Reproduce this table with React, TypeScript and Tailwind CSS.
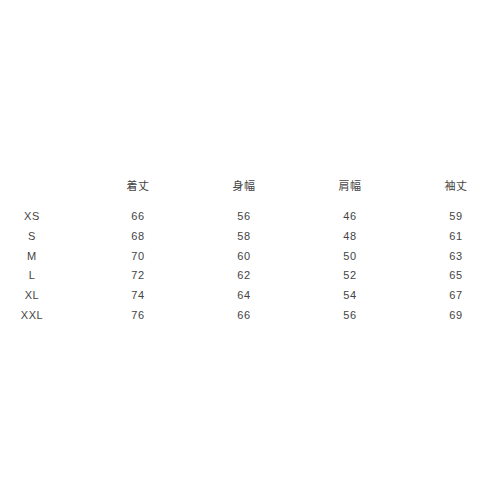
const headers = ['', '着丈', '身幅', '肩幅', '袖丈']

const rows = [
  ['XS', '66', '56', '46', '59'],
  ['S', '68', '58', '48', '61'],
  ['M', '70', '60', '50', '63'],
  ['L', '72', '62', '52', '65'],
  ['XL', '74', '64', '54', '67'],
  ['XXL', '76', '66', '56', '69'],
]

export default function App() {
  return (
    <div
      className="w-[500px] h-[500px] bg-white overflow-hidden pt-[177px] text-[#444]"
      style={{ fontFamily: '"Liberation Sans", "Noto Sans CJK JP", sans-serif' }}
    >
      <div className="grid grid-cols-[72px_repeat(4,80px)] gap-x-[26px] text-[11px] tracking-[0.6px]">
        {headers.map((h, i) => (
          <div key={i} className={`h-[18px] leading-[18px] text-center ${i === 0 ? 'pr-[8px]' : ''}`}>
            {h}
          </div>
        ))}
        <div className="col-span-5 h-[12px]" />
        {rows.map((row) =>
          row.map((cell, i) => (
            <div
              key={row[0] + i}
              className={`h-[19.8px] leading-[19.8px] text-center ${i === 0 ? 'pr-[8px]' : ''}`}
            >
              {cell}
            </div>
          ))
        )}
      </div>
    </div>
  )
}
